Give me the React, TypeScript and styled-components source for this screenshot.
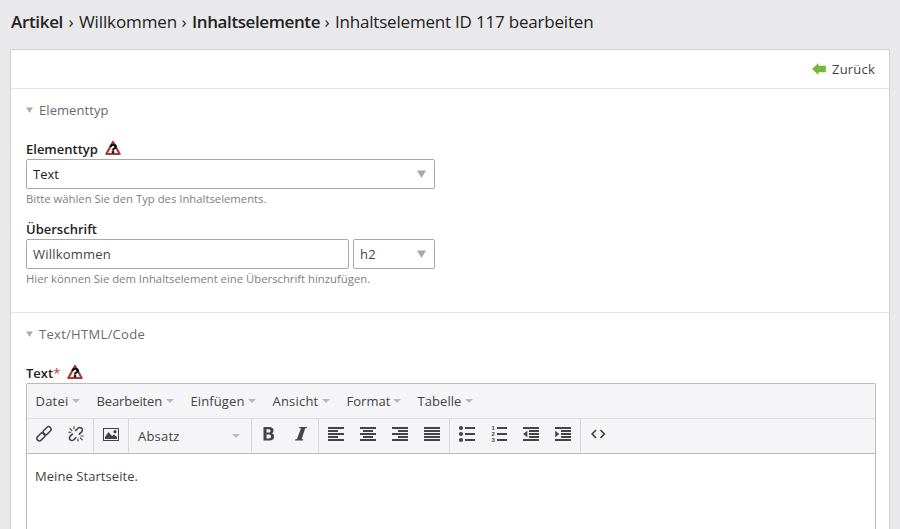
import React from 'react';
import styled, { createGlobalStyle } from 'styled-components';

const GlobalStyle = createGlobalStyle`
  * { box-sizing: border-box; }
  body {
    margin: 0;
    background: #e9e9eb;
    color: #444;
    font: 13px/18px "Open Sans", "Noto Sans", sans-serif;
    overflow: hidden;
  }
`;

const Page = styled.div`
  height: 529px;
  padding: 0 10px;
  display: flex;
  flex-direction: column;
  overflow: hidden;
`;

const Breadcrumb = styled.h1`
  margin: 0;
  height: 49px;
  padding: 10px 0 0 1px;
  display: flex;
  font-size: 17px;
  line-height: 24px;
  font-weight: 400;
  color: #222;
  white-space: nowrap;
`;

const Crumb = styled.span<{ $w: number; $bold?: boolean; $ls: number }>`
  width: ${p => p.$w}px;
  font-weight: ${p => (p.$bold ? 600 : 400)};
  letter-spacing: ${p => p.$ls}px;
`;

const Divider = styled.span`
  width: 16px;
  text-align: center;
`;

const Panel = styled.main`
  flex: 1;
  min-height: 0;
  display: flex;
  flex-direction: column;
  background: #fff;
  border: 1px solid #cfcfd1;
  border-bottom: 0;
`;

const BackBar = styled.div`
  flex: none;
  height: 39px;
  padding-right: 14px;
  display: flex;
  align-items: center;
  justify-content: flex-end;
  gap: 6px;
  border-bottom: 1px solid #e5e5e7;
  letter-spacing: 0.2px;
`;

const Section = styled.section<{ $h?: number }>`
  ${p => (p.$h ? `flex: none; height: ${p.$h}px; border-bottom: 1px solid #e5e5e7;` : 'flex: 1; min-height: 0;')}
  padding: 11px 13px 0 15px;
  display: flex;
  flex-direction: column;
`;

const Legend = styled.div<{ $ls: number }>`
  height: 20px;
  display: flex;
  align-items: center;
  gap: 6px;
  color: #6a6a6c;
  letter-spacing: ${p => p.$ls}px;
`;

const Label = styled.label<{ $top: number }>`
  height: 18px;
  margin-top: ${p => p.$top}px;
  display: flex;
  align-items: center;
  font-weight: 600;
  color: #222;
`;

const Required = styled.span`
  color: #c33;
  font-weight: 400;
  margin-right: 7px;
`;

const LabelText = styled.span<{ $gap?: number }>`
  margin-right: ${p => p.$gap ?? 0}px;
`;

const Row = styled.div`
  display: flex;
  gap: 4px;
`;

const Field = styled.div<{ $w: number; $ls?: number; $dark?: boolean }>`
  flex: none;
  width: ${p => p.$w}px;
  height: 30px;
  margin-top: 1px;
  padding: 0 8px 0 6px;
  display: flex;
  align-items: center;
  justify-content: space-between;
  border: 1px solid #aaa;
  border-radius: 2px;
  color: ${p => (p.$dark ? '#222' : '#444')};
  letter-spacing: ${p => p.$ls ?? 0}px;
`;

const Hint = styled.p`
  margin: 2px 0 0;
  height: 16px;
  font-size: 11.3px;
  line-height: 16px;
  letter-spacing: 0;
  color: #808080;
  white-space: nowrap;
`;

const Editor = styled.div`
  flex: 1;
  min-height: 0;
  margin-top: 1px;
  border: 1px solid #bbb;
  border-bottom: 0;
  border-radius: 2px 2px 0 0;
`;

const MenuBar = styled.div`
  height: 35px;
  padding-left: 8px;
  display: flex;
  align-items: center;
  gap: 16px;
  background: #f5f5f7;
  border-bottom: 1px solid #dedee0;
`;

const MenuItem = styled.div<{ $w: number; $ls: number }>`
  width: ${p => p.$w}px;
  padding-left: 0.5px;
  display: flex;
  align-items: center;
  justify-content: space-between;
  letter-spacing: ${p => p.$ls}px;
`;

const ToolBar = styled.div`
  height: 35px;
  display: flex;
  background: #f5f5f7;
  border-bottom: 1px solid #bbb;
`;

const ToolGroup = styled.div<{ $last?: boolean }>`
  display: flex;
  padding: 0 1px;
  border-right: ${p => (p.$last ? 0 : 1)}px solid #d8d8da;
`;

const Tool = styled.button`
  width: 32px;
  height: 30px;
  padding: 0 1px 0 0;
  border: 0;
  background: none;
  display: flex;
  align-items: center;
  justify-content: center;
`;

const FormatSelect = styled.div`
  width: 120px;
  height: 34px;
  padding: 0 10px 0 8px;
  display: flex;
  align-items: center;
  justify-content: space-between;
  letter-spacing: 0.2px;
`;

const Content = styled.div`
  padding: 13px 8px;
  letter-spacing: 0.06px;
`;

const Triangle = ({ small }: { small?: boolean }) => (
  <svg width={small ? 7 : 9} height={small ? 6 : 8} viewBox="0 0 9 8">
    <path d="M0 .5h9L4.5 8z" fill="#aaa" />
  </svg>
);

const Caret = () => (
  <svg width="8" height="4" viewBox="0 0 8 4"><path d="M0 0h8L4 4z" fill="#b5babd" /></svg>
);

const WarningSvg = styled.svg`
  margin-bottom: 2px;
  overflow: visible;
`;

const Warning = () => (
  <WarningSvg width="16" height="16" viewBox="0 0 16 16">
    <path d="M8 2 14.7 14H1.3z" fill="#fff" stroke="#a93a38" strokeWidth="2.2" strokeLinejoin="round" />
    <text x="8.2" y="13" textAnchor="middle" fontFamily="Liberation Sans" fontWeight="700" fontSize="13" fill="#000" stroke="#000" strokeWidth=".4">?</text>
  </WarningSvg>
);

const BackArrow = () => (
  <svg width="14" height="12" viewBox="0 0 14 12">
    <path d="M0 6 6.4 0v2.8h7.4v6.4H6.4V12z" fill="#74b83c" />
  </svg>
);

const IconSvg = styled.svg`
  overflow: visible;
`;

const Icon = ({ children }: { children: React.ReactNode }) => (
  <IconSvg width="16" height="16" viewBox="0 0 16 16" fill="#444">{children}</IconSvg>
);

/* Five stacked text lines, each given as [x, width]. */
const Lines = ({ rows }: { rows: number[][] }) => (
  <>{rows.map(([x, w], i) => <rect key={i} x={x} y={1 + i * 3} width={w} height="2" />)}</>
);

const full = [0, 16];

const chain = (
  <g fill="none" stroke="#444" strokeWidth="1.5">
    <rect x="-4.1" y="-2.5" width="9.4" height="5" rx="2.5" transform="translate(10.6 5.2) rotate(-45)" />
    <rect x="-5.3" y="-2.5" width="9.4" height="5" rx="2.5" transform="translate(5.4 10.4) rotate(-45)" />
  </g>
);

const broken = (
  <>
    <path d="M7.2 5 10 2.2a2.5 2.5 0 0 1 3.6 0 2.5 2.5 0 0 1 0 3.6L10.8 8.6M8.4 11.2l-2.6 2.6a2.5 2.5 0 0 1-3.6 0 2.5 2.5 0 0 1 0-3.6L4.8 7.6" fill="none" stroke="#444" strokeWidth="1.6" />
    <path d="M1.6 2.2 4.2 4.8M6 .3v3M.3 6.2h3M12 11.6l2.6 2.6M10 12.5v3M12.6 10h3" fill="none" stroke="#444" strokeWidth="1.1" />
  </>
);

const picture = (
  <>
    <path fillRule="evenodd" d="M0 2h16v13H0zM1 3v11h14V3z" />
    <path d="M2 13V11l3.5-5L9 10l2-1.5L14 11v2z" /><circle cx="12" cy="5.7" r="1.6" />
  </>
);

const groups: { name: string; icon: React.ReactNode }[][] = [
  [
    { name: 'bold', icon: <path fillRule="evenodd" d="M2.5 1h6c2.5 0 4 1.3 4 3.4 0 1.4-.7 2.4-1.8 2.9 1.5.4 2.4 1.5 2.4 3.1 0 2.5-1.7 4.1-4.4 4.1H2.5zM5.5 3.2v3.3h2c1.3 0 2-.6 2-1.6 0-1.1-.7-1.7-2-1.7zm0 5.4v3.8h2.3c1.5 0 2.2-.6 2.2-1.9s-.7-1.9-2.2-1.9z" /> },
    { name: 'italic', icon: <path d="M6.5 1H14l-.3 1.3h-1.5L8.6 13.2h1.6l-.3 1.3H2.1l.3-1.3h1.5L8 2.3H6.2z" /> },
  ],
  [
    { name: 'left', icon: <Lines rows={[full, [0, 10], full, [0, 10], full]} /> },
    { name: 'center', icon: <Lines rows={[full, [3, 10], full, [3, 10], full]} /> },
    { name: 'right', icon: <Lines rows={[full, [6, 10], full, [6, 10], full]} /> },
    { name: 'justify', icon: <Lines rows={[full, full, full, full, full]} /> },
  ],
  [
    { name: 'bullets', icon: <>{[2, 8, 14].map(y => <g key={y}><circle cx="2" cy={y} r="2.1" /><rect x="6" y={y - 1} width="10" height="2" /></g>)}</> },
    { name: 'numbers', icon: <>{[2, 8, 14].map((y, i) => <g key={y}><text x="0.6" y={y + 2} fontFamily="Liberation Sans" fontSize="6" fontWeight="700">{i + 1}</text><rect x="6" y={y - 1} width="10" height="2" /></g>)}</> },
    { name: 'outdent', icon: <><Lines rows={[full, [6, 10], [6, 10], [6, 10], full]} /><path d="M4.3 4.7v6.6L.2 8z" /></> },
    { name: 'indent', icon: <><Lines rows={[full, [6, 10], [6, 10], [6, 10], full]} /><path d="M.2 4.7v6.6L4.3 8z" /></> },
  ],
];

const menus: [string, number, number][] = [
  ['Datei', 45, 0.2],
  ['Bearbeiten', 78, -0.1],
  ['Einfügen', 66, 0.1],
  ['Ansicht', 58, 0.2],
  ['Format', 55, 0.04],
  ['Tabelle', 56, 0.07],
];

export default function App() {
  return (
    <Page>
      <GlobalStyle />
      <Breadcrumb>
        <Crumb $w={52} $ls={-0.33} $bold>Artikel</Crumb><Divider>›</Divider>
        <Crumb $w={97} $ls={-0.12}>Willkommen</Crumb><Divider>›</Divider>
        <Crumb $w={127} $ls={-0.4} $bold>Inhaltselemente</Crumb><Divider>›</Divider>
        <Crumb $w={260} $ls={-0.2}>Inhaltselement ID 117 bearbeiten</Crumb>
      </Breadcrumb>
      <Panel>
        <BackBar><BackArrow />Zurück</BackBar>
        <Section $h={224}>
          <Legend $ls={0.07}><Triangle small />Elementtyp</Legend>
          <Label $top={20}><LabelText $gap={7}>Elementtyp</LabelText><Warning /></Label>
          <Field $w={409} $dark>Text<Triangle /></Field>
          <Hint>Bitte wählen Sie den Typ des Inhaltselements.</Hint>
          <Label $top={13}>Überschrift</Label>
          <Row>
            <Field $w={323} $ls={0.21}>Willkommen</Field>
            <Field $w={82} $ls={0.2}>h2<Triangle /></Field>
          </Row>
          <Hint>Hier können Sie dem Inhaltselement eine Überschrift hinzufügen.</Hint>
        </Section>
        <Section>
          <Legend $ls={0.29}><Triangle small />Text/HTML/Code</Legend>
          <Label $top={20}><LabelText>Text</LabelText><Required>*</Required><Warning /></Label>
          <Editor>
            <MenuBar>
              {menus.map(([name, w, ls]) => <MenuItem key={name} $w={w} $ls={ls}>{name}<Caret /></MenuItem>)}
            </MenuBar>
            <ToolBar>
              <ToolGroup><Tool><Icon>{chain}</Icon></Tool><Tool><Icon>{broken}</Icon></Tool></ToolGroup>
              <ToolGroup><Tool><Icon>{picture}</Icon></Tool></ToolGroup>
              <ToolGroup><FormatSelect>Absatz<Caret /></FormatSelect></ToolGroup>
              {groups.map((group, i) => (
                <ToolGroup key={i}>
                  {group.map(tool => <Tool key={tool.name} aria-label={tool.name}><Icon>{tool.icon}</Icon></Tool>)}
                </ToolGroup>
              ))}
              <ToolGroup $last>
                <Tool><Icon><path d="M6 4 2.2 8 6 12M10.5 4l3.8 4-3.8 4" fill="none" stroke="#444" strokeWidth="1.7" /></Icon></Tool>
              </ToolGroup>
            </ToolBar>
            <Content>Meine Startseite.</Content>
          </Editor>
        </Section>
      </Panel>
    </Page>
  );
}
